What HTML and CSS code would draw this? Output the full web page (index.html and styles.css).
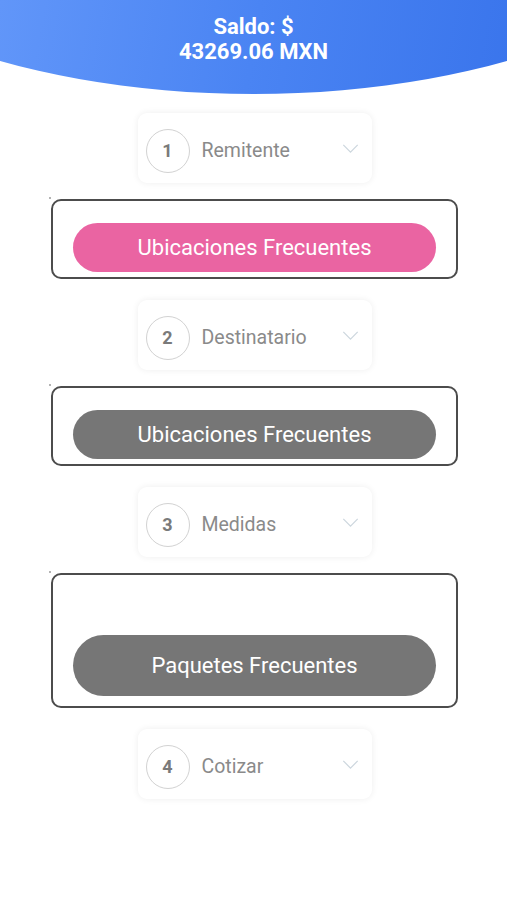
FILE: index.html
```html
<!DOCTYPE html>
<html lang="es">
<head>
    <meta charset="UTF-8" />
    <meta name="viewport" content="width=device-width, initial-scale=1.0" />
    <title>Nuevo envío</title>
    <link rel="stylesheet" href="styles.css">
</head>
<body>
<header class="balance">
    <div class="balance-text">Saldo: $<br>43269.06 MXN</div>
</header>

<main class="steps">
    <div class="step">
        <div class="step-num">1</div>
        <div class="step-label">Remitente</div>
        <svg class="chevron" viewBox="0 0 18 10"><path d="M1 1l8 8 8-8" /></svg>
    </div>
    <div class="panel">
        <button class="btn btn-pink">Ubicaciones Frecuentes</button>
    </div>

    <div class="step">
        <div class="step-num">2</div>
        <div class="step-label">Destinatario</div>
        <svg class="chevron" viewBox="0 0 18 10"><path d="M1 1l8 8 8-8" /></svg>
    </div>
    <div class="panel">
        <button class="btn">Ubicaciones Frecuentes</button>
    </div>

    <div class="step">
        <div class="step-num">3</div>
        <div class="step-label">Medidas</div>
        <svg class="chevron" viewBox="0 0 18 10"><path d="M1 1l8 8 8-8" /></svg>
    </div>
    <div class="panel panel-tall">
        <button class="btn btn-big">Paquetes Frecuentes</button>
    </div>

    <div class="step">
        <div class="step-num">4</div>
        <div class="step-label">Cotizar</div>
        <svg class="chevron" viewBox="0 0 18 10"><path d="M1 1l8 8 8-8" /></svg>
    </div>
</main>
</body>
</html>
```

FILE: styles.css
```css
body {
    margin: 0;
    font-family: Roboto, "Noto Sans", Arial, sans-serif;
    background-color: #ffffff;
}

.balance {
    height: 94px;
    background: linear-gradient(100deg, #6196f9 0%, #4a84f3 50%, #3a75ec 100%);
    clip-path: ellipse(456px 196px at 50% -102px);
    color: #ffffff;
    text-align: center;
}

.balance-text {
    padding-top: 14px;
    font-size: 22px;
    font-weight: bold;
    line-height: 25px;
}

.steps {
    display: flex;
    flex-direction: column;
    align-items: center;
    padding: 19px 0 40px 2px;
}

.step {
    display: flex;
    align-items: center;
    width: 234px;
    height: 70px;
    box-sizing: border-box;
    padding: 5px 13px 0 8px;
    background: #ffffff;
    border-radius: 9px;
    box-shadow: 0 0 7px rgba(0, 0, 0, 0.07);
}

.step-num {
    width: 44px;
    height: 44px;
    box-sizing: border-box;
    border: 1.5px solid #d2d2d2;
    border-radius: 50%;
    display: flex;
    align-items: center;
    justify-content: center;
    font-size: 18px;
    font-weight: bold;
    color: #7a7a7a;
}

.step-label {
    flex: 1;
    margin-left: 12px;
    font-size: 19.5px;
    color: #8a8a8a;
}

.chevron {
    width: 17px;
    height: 9px;
    margin-top: -5px;
    fill: none;
    stroke: #cdd7de;
    stroke-width: 1.4;
}

.panel {
    position: relative;
    width: 407px;
    box-sizing: border-box;
    margin: 16px 0 21px;
    padding: 22px 20px 5px;
    border: 2px solid #4c4c4c;
    border-radius: 10px;
}

.panel::before {
    content: "";
    position: absolute;
    left: -4px;
    top: -4px;
    width: 2px;
    height: 2px;
    border-radius: 50%;
    background: #9a9a9a;
}

.panel-tall {
    padding-top: 60px;
    padding-bottom: 10px;
}

.btn {
    display: block;
    width: 100%;
    height: 49px;
    border: none;
    border-radius: 25px;
    background-color: #767676;
    color: #ffffff;
    font-family: inherit;
    font-size: 22px;
}

.btn-pink {
    background-color: #ea64a2;
}

.btn-big {
    height: 61px;
    border-radius: 31px;
}
```
